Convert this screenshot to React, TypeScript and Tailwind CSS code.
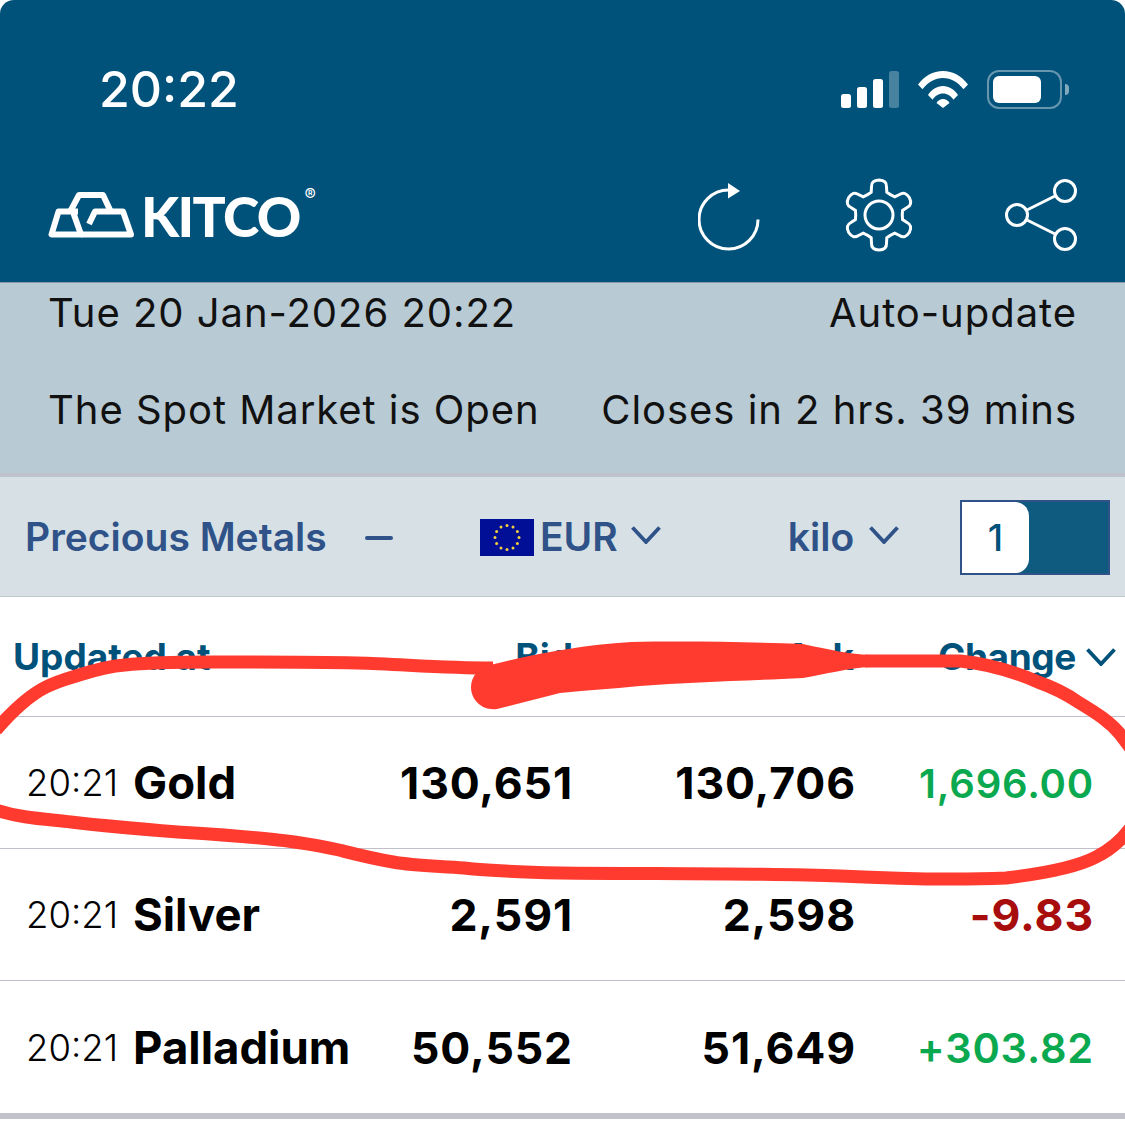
const gearPath = () => {
  const cx = 36;
  const cy = 38;
  let d = "";
  for (let i = 0; i < 6; i++) {
    const a = ((-90 + i * 60) * Math.PI) / 180;
    const pt = (r: number, off: number) => {
      const t = a + (off * Math.PI) / 180;
      return `${(cx + r * Math.cos(t)).toFixed(2)} ${(cy + r * Math.sin(t)).toFixed(2)}`;
    };
    d += `${i === 0 ? "M" : "L"}${pt(24, -19)} `;
    d += `L${pt(29, -15)} Q${pt(35.500, -13)} ${pt(35, 0)} Q${pt(35.500, 13)} ${pt(29, 15)} L${pt(24, 19)} `;
    d += `Q${pt(23, 30)} ${pt(24, 41)} `;
  }
  return d + "Z";
};

const Chevron = ({ className }: { className: string }) => (
  <svg viewBox="0 0 30 18" className={className} fill="none" stroke="currentColor" strokeWidth="3.8">
    <path d="M1.500 1.500 15 16 28.500 1.500" />
  </svg>
);

const EuStars = () => {
  const stars = [];
  for (let i = 0; i < 12; i++) {
    const t = (i * 30 * Math.PI) / 180;
    stars.push(<circle key={i} cx={27 + 12 * Math.sin(t)} cy={18.5 - 12 * Math.cos(t)} r="1.500" fill="#f4d03f" />);
  }
  return (
    <svg viewBox="0 0 54 37" className="w-[54px] h-[37px] shrink-0">
      <rect width="54" height="37" fill="#000f96" />
      {stars}
    </svg>
  );
};

const rows = [
  { name: "Gold", bid: "130,651", ask: "130,706", change: "1,696.00", color: "text-[#0aa84f] text-[40px] font-semibold" },
  { name: "Silver", bid: "2,591", ask: "2,598", change: "-9.83", color: "text-[#a80d0d] text-[44.5px] font-bold" },
  { name: "Palladium", bid: "50,552", ask: "51,649", change: "+303.82", color: "text-[#0aa84f] text-[41.5px] font-semibold" },
];

export default function App() {
  return (
    <div className="relative w-[1125px] h-[1134px] bg-white overflow-hidden font-['Inter',sans-serif]">
      {/* header */}
      <header className="h-[283px] bg-[#00527b] rounded-t-[14px] border-b border-[#8a9aa5] text-white">
        <div className="flex items-center justify-between h-[176px] pl-[99px] pr-[56px] pt-[2px]">
          <span className="text-[50px] font-medium leading-none">20:22</span>
          <div className="flex items-center gap-[19px]">
            <svg viewBox="0 0 58 37" className="w-[58px] h-[37px]" fill="#fff">
              <rect x="0" y="23" width="10" height="14" rx="2.5" />
              <rect x="16" y="16" width="10" height="21" rx="2.5" />
              <rect x="32" y="8" width="10" height="29" rx="2.5" />
              <rect x="48" y="0" width="10" height="37" rx="2.5" opacity="0.28" />
            </svg>
            <svg viewBox="0 0 50 37" className="w-[50px] h-[37px]" fill="#fff">
              <path d="M0 13.500C6.500 5 15 0 25 0s18.500 5 25 13.500l-4.500 4.700C40 11 33 7 25 7S10 11 4.500 18.200Z" />
              <path d="M10 24C13.500 18.500 19 15 25 15s11.500 3.500 15 9l-4.600 4.700C33 25 29.300 22.500 25 22.500s-8 2.500-10.400 6.200Z" />
              <path d="M18.500 32C20 29.500 22.500 28 25 28s5 1.500 6.500 4L25 37Z" />
            </svg>
            <div className="flex items-center gap-[3px]">
              <div className="w-[75px] h-[39px] rounded-[12px] border-[2px] border-white/40 p-[4px] pr-[19px]">
                <div className="h-full rounded-[6px] bg-white" />
              </div>
              <div className="w-[4px] h-[11px] rounded-r-full bg-white/50" />
            </div>
          </div>
        </div>

        <div className="flex items-start justify-between pl-[48px] pr-[47px]">
          {/* logo */}
          <div className="flex items-end mt-[16px] h-[46px]">
            <svg viewBox="0 0 86 46" className="w-[86px] h-[46px]" fill="none" stroke="#fff" strokeWidth="6" strokeLinejoin="round">
              <path d="M22 20 31 3H55L63 20" />
              <path d="M30 19.500H10.500L3.500 42.500H33L25 20" />
              <path d="M33 42.500H83L75 19.500H47L41 32" />
            </svg>
            <div className="relative ml-[7px] h-[46px] w-[175px]">
              <span className="block text-[55px] leading-[49px] font-['Lato',sans-serif] font-black tracking-[-0.03em]">KITCO</span>
              <span className="absolute right-0 top-[-5px] text-[17px] leading-none">®</span>
            </div>
          </div>

          {/* actions */}
          <div className="flex items-start mt-[6px]">
            <svg viewBox="0 0 62 72" className="w-[62px] h-[72px] mt-[1px] ml-[2px]" fill="none" stroke="#fff" strokeWidth="3">
              <path d="M60 36.500A29.500 29.500 0 1 1 30.500 7" />
              <path d="M30 0 42 8 30 15.500Z" fill="#fff" stroke="none" />
            </svg>
            <svg viewBox="0 0 72 76" className="w-[72px] h-[76px] ml-[83px] mt-[-5px]" fill="none" stroke="#fff" strokeWidth="3">
              <path d={gearPath()} />
              <circle cx="36" cy="38" r="14" />
            </svg>
            <svg viewBox="0 0 74 74" className="w-[74px] h-[74px] ml-[89px] mt-[-4px]" fill="none" stroke="#fff" strokeWidth="3">
              <circle cx="61" cy="13" r="10.500" />
              <circle cx="13" cy="37" r="10.500" />
              <circle cx="61" cy="61" r="10.500" />
              <path d="M23 32 51 18M23 42 51 56" />
            </svg>
          </div>
        </div>
      </header>

      {/* market status */}
      <section className="h-[194px] bg-[#b8cad4] border-b-[4px] border-[#bfc1cb] px-[48px] text-[40px] leading-none tracking-[0.024em] text-[#111]">
        <div className="flex justify-between pt-[10px]">
          <span>Tue 20 Jan-2026 20:22</span>
          <span>Auto-update</span>
        </div>
        <div className="flex justify-between mt-[57px]">
          <span>The Spot Market is Open</span>
          <span>Closes in 2 hrs. 39 mins</span>
        </div>
      </section>

      {/* toolbar */}
      <section className="flex items-center h-[120px] bg-[#d7e1e5] border-b border-[#c0c8cc] pt-[2px] pl-[25px] pr-[15px] text-[#2f5288] text-[39px] font-semibold">
        <span className="w-[340px]">Precious Metals</span>
        <div className="w-[28px] h-[4px] rounded-full bg-[#2f5288]" />
        <div className="ml-[87px] flex items-center">
          <EuStars />
          <span className="ml-[6px]">EUR</span>
          <Chevron className="ml-[13px] mb-[5px] w-[30px] h-[18px]" />
        </div>
        <span className="ml-[127px]">kilo</span>
        <Chevron className="ml-[15px] mb-[5px] w-[30px] h-[18px]" />
        <div className="ml-auto w-[150px] h-[75px] border-[2px] border-[#2f5288] bg-[#0f5a7f]">
          <div className="flex items-center justify-center w-[67px] h-full rounded-r-[14px] bg-white text-[#00527b] text-[37px] font-medium">
            1
          </div>
        </div>
      </section>

      {/* table head */}
      <div className="grid grid-cols-[387px_173px_281px_1fr] items-center h-[120px] border-b border-[#c0c0c8] pl-[13px] pr-[9px] text-[37px] font-bold text-[#00527b]">
        <span>Updated at</span>
        <span className="text-right">Bid</span>
        <span className="text-right">Ask</span>
        <div className="flex items-center justify-end">
          <span className="tracking-[-0.01em]">Change</span>
          <Chevron className="ml-[10px] w-[30px] h-[18px]" />
        </div>
      </div>

      {/* rows */}
      {rows.map((r, i) => (
        <div
          key={r.name}
          className={`grid grid-cols-[330px_217px_283px_1fr] items-center pl-[26px] pr-[31px] pt-[2px] text-black ${
            i === 2 ? "border-b-[6px] border-[#c2c2cc] h-[138px]" : "border-b border-[#c0c0c8] h-[132px]"
          }`}
        >
          <div className="flex items-center">
            <span className="w-[107px] shrink-0 text-[36.5px] font-light">20:21</span>
            <span className="text-[45.5px] font-bold">{r.name}</span>
          </div>
          <span className="text-right text-[44.5px] font-bold tracking-[0.02em]">{r.bid}</span>
          <span className="text-right text-[44.5px] font-bold tracking-[0.02em]">{r.ask}</span>
          <span className={`text-right tracking-[0.02em] ${r.color}`}>{r.change}</span>
        </div>
      ))}

      {/* red marker drawn over the screenshot */}
      <svg viewBox="0 0 1125 1134" className="absolute inset-0 w-[1125px] h-[1134px] pointer-events-none" fill="none">
        <path
          d="M-4 730C15 708 30 695 46 687C60 680 70 678 79 675C95 670 110 666 125 665C150 662 180 662 214 662C270 662 310 662 357 663C400 664 440 668 493 668"
          stroke="#ff3b30"
          strokeWidth="13"
        />
        <path
          d="M490 665C530 655 580 645 631 642C690 641 750 642 803 644C830 650 850 654 870 655L870 667C850 668 825 674 803 678C740 681 690 682 640 686C610 689 590 690 560 693L497 709C482 711 471 700 471 687C471 675 480 668 490 665Z"
          fill="#ff3b30"
        />
        <path
          d="M865 661L960 661C990 664 1015 672 1038 682C1055 688 1065 693 1078 702C1098 714 1110 722 1120 734L1132 750"
          stroke="#ff3b30"
          strokeWidth="13"
        />
        <path
          d="M1132 826C1122 840 1110 850 1096 857C1075 868 1040 874 1006 878C960 880 900 879 840 876C760 873 650 874 560 873C520 872 490 871 464 868C440 866 415 866 393 862C370 858 355 854 339 850C320 846 300 842 278 840C245 836 210 834 178 832C140 829 105 826 71 822C45 819 20 818 -4 810"
          stroke="#ff3b30"
          strokeWidth="13"
        />
      </svg>
    </div>
  );
}
